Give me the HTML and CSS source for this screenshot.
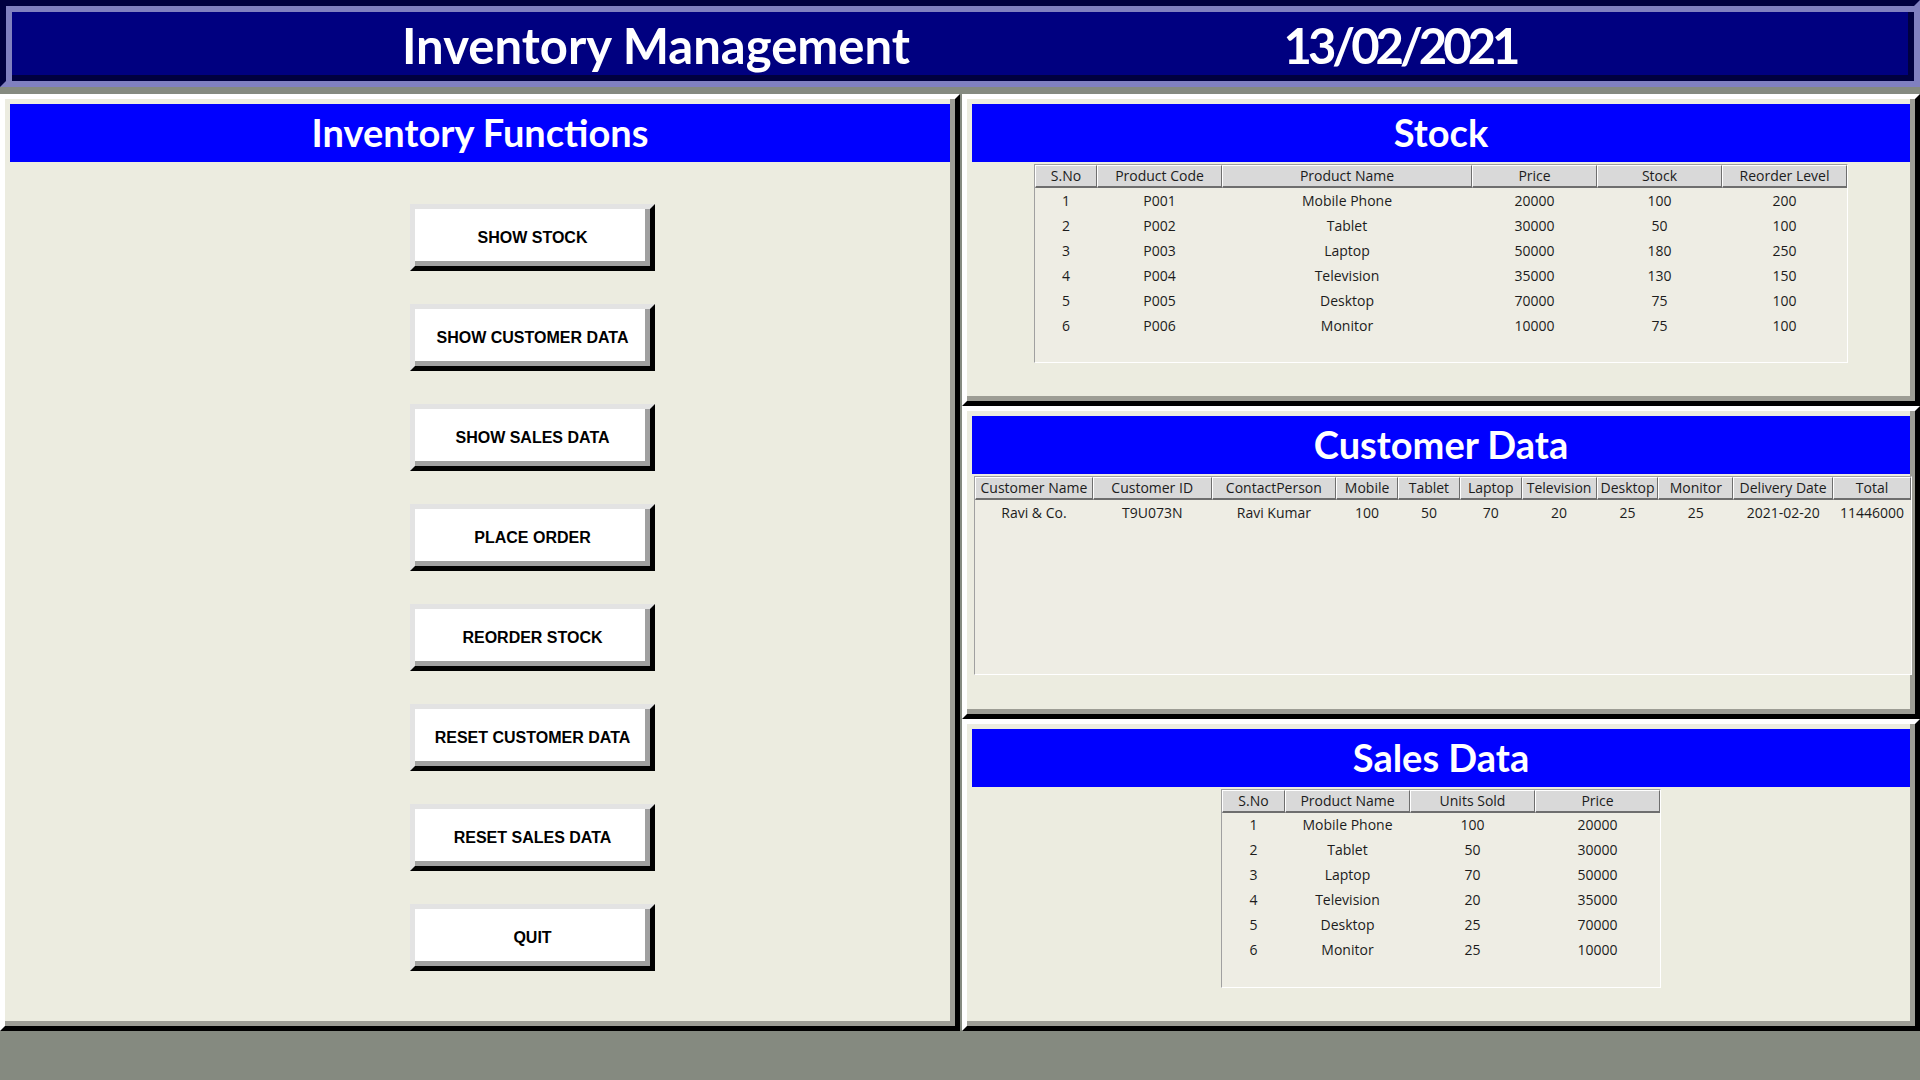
FILE: index.html
```html
<!DOCTYPE html>
<html lang="en">
<head>
<meta charset="utf-8">
<title>Inventory Management</title>
<link rel="stylesheet" href="styles.css">
</head>
<body>
<div class="app">
  <header class="topbar">
    <div class="title-main">Inventory Management</div>
    <div class="title-date">13/02/2021</div>
  </header>
  <main class="workspace">
    <section class="panel panel-functions">
      <h2 class="panel-title">Inventory Functions</h2>
      <div class="button-list">
        <button class="action-btn">SHOW STOCK</button>
        <button class="action-btn">SHOW CUSTOMER DATA</button>
        <button class="action-btn">SHOW SALES DATA</button>
        <button class="action-btn">PLACE ORDER</button>
        <button class="action-btn">REORDER STOCK</button>
        <button class="action-btn">RESET CUSTOMER DATA</button>
        <button class="action-btn">RESET SALES DATA</button>
        <button class="action-btn">QUIT</button>
      </div>
    </section>
    <div class="right-col">
      <section class="panel panel-data">
        <h2 class="panel-title">Stock</h2>
        <div class="grid-box stock-box">
          <table class="grid">
            <colgroup>
              <col class="w62"><col class="w125"><col class="w250"><col class="w125"><col class="w125"><col class="w125">
            </colgroup>
            <thead>
              <tr><th>S.No</th><th>Product Code</th><th>Product Name</th><th>Price</th><th>Stock</th><th>Reorder Level</th></tr>
            </thead>
            <tbody>
              <tr><td>1</td><td>P001</td><td>Mobile Phone</td><td>20000</td><td>100</td><td>200</td></tr>
              <tr><td>2</td><td>P002</td><td>Tablet</td><td>30000</td><td>50</td><td>100</td></tr>
              <tr><td>3</td><td>P003</td><td>Laptop</td><td>50000</td><td>180</td><td>250</td></tr>
              <tr><td>4</td><td>P004</td><td>Television</td><td>35000</td><td>130</td><td>150</td></tr>
              <tr><td>5</td><td>P005</td><td>Desktop</td><td>70000</td><td>75</td><td>100</td></tr>
              <tr><td>6</td><td>P006</td><td>Monitor</td><td>10000</td><td>75</td><td>100</td></tr>
            </tbody>
          </table>
        </div>
      </section>
      <section class="panel panel-data">
        <h2 class="panel-title">Customer Data</h2>
        <div class="grid-box customer-box">
          <table class="grid">
            <colgroup>
              <col class="w118"><col class="w119"><col class="w125"><col class="w62"><col class="w62"><col class="w62"><col class="w75"><col class="w62"><col class="w75"><col class="w100"><col class="w78">
            </colgroup>
            <thead>
              <tr><th>Customer Name</th><th>Customer ID</th><th>ContactPerson</th><th>Mobile</th><th>Tablet</th><th>Laptop</th><th>Television</th><th>Desktop</th><th>Monitor</th><th>Delivery Date</th><th>Total</th></tr>
            </thead>
            <tbody>
              <tr><td>Ravi &amp; Co.</td><td>T9U073N</td><td>Ravi Kumar</td><td>100</td><td>50</td><td>70</td><td>20</td><td>25</td><td>25</td><td>2021-02-20</td><td>11446000</td></tr>
            </tbody>
          </table>
        </div>
      </section>
      <section class="panel panel-data">
        <h2 class="panel-title">Sales Data</h2>
        <div class="grid-box sales-box">
          <table class="grid">
            <colgroup>
              <col class="w63"><col class="w125"><col class="w125"><col class="w125">
            </colgroup>
            <thead>
              <tr><th>S.No</th><th>Product Name</th><th>Units Sold</th><th>Price</th></tr>
            </thead>
            <tbody>
              <tr><td>1</td><td>Mobile Phone</td><td>100</td><td>20000</td></tr>
              <tr><td>2</td><td>Tablet</td><td>50</td><td>30000</td></tr>
              <tr><td>3</td><td>Laptop</td><td>70</td><td>50000</td></tr>
              <tr><td>4</td><td>Television</td><td>20</td><td>35000</td></tr>
              <tr><td>5</td><td>Desktop</td><td>25</td><td>70000</td></tr>
              <tr><td>6</td><td>Monitor</td><td>25</td><td>10000</td></tr>
            </tbody>
          </table>
        </div>
      </section>
    </div>
  </main>
</div>
</body>
</html>
```

FILE: styles.css
```css
* { box-sizing: border-box; }

html, body {
  margin: 0;
  padding: 0;
}

body {
  width: 1920px;
  height: 1080px;
  overflow: hidden;
  background: #858a80;
  font-family: "Open Sans", "Noto Sans", sans-serif;
}

.app {
  display: flex;
  flex-direction: column;
}

/* ---------- top bar (groove relief) ---------- */
.topbar {
  height: 87px;
  background: #000080;
  border: 6px solid;
  border-color: #000040 #8080c0 #8080c0 #000040;
  box-shadow: inset 6px 6px 0 #8080c0, inset -6px -6px 0 #000040;
  display: flex;
  align-items: center;
  padding-top: 4px;
  color: #ffffff;
  font-family: Lato, "Open Sans", sans-serif;
  font-weight: 700;
  font-size: 49px;
  line-height: 1;
  margin-bottom: 7px;
}

.title-main {
  width: 600px;
  margin-left: 350px;
  text-align: center;
  white-space: nowrap;
}

.title-date {
  width: 300px;
  margin-left: 294px;
  text-align: center;
  white-space: nowrap;
  letter-spacing: -4px;
}

/* ---------- workspace ---------- */
.workspace {
  display: flex;
  gap: 2px;
  height: 937px;
}

.panel {
  background: #ecece0;
  border: 5px solid;
  border-color: #ffffff #000000 #000000 #ffffff;
  box-shadow: inset -5px -5px 0 #9d9d95;
  padding: 5px;
}

.panel-functions {
  width: 960px;
  height: 100%;
}

.right-col {
  width: 958px;
  display: flex;
  flex-direction: column;
}

.panel-data {
  flex: 1;
  display: flex;
  flex-direction: column;
  align-items: center;
}

.panel-title {
  margin: 0;
  height: 58px;
  width: 100%;
  background: #0000ff;
  color: #ffffff;
  font-family: Lato, "Open Sans", sans-serif;
  font-weight: 700;
  font-size: 38px;
  line-height: 56px;
  text-align: center;
}

/* ---------- action buttons ---------- */
.button-list {
  display: flex;
  flex-direction: column;
  gap: 33px;
  margin-top: 42px;
  padding-left: 400px;
}

.action-btn {
  width: 245px;
  height: 67px;
  margin: 0;
  padding: 0;
  background: #ffffff;
  border: 5px solid;
  border-color: #e3e3e3 #000000 #000000 #e3e3e3;
  box-shadow: inset -5px -5px 0 #a0a0a0;
  font-family: "Liberation Sans", Arial, sans-serif;
  font-weight: 700;
  font-size: 16px;
  color: #000000;
  text-align: center;
  cursor: pointer;
}

/* ---------- data grids ---------- */
.grid-box {
  margin-top: 2px;
  height: 199px;
  background: #eeede4;
  border: 1px solid;
  border-color: #a0a0a0 #ffffff #ffffff #a0a0a0;
  overflow: hidden;
}

.stock-box { width: 814px; }
.customer-box { width: 938px; align-self: flex-start; margin-left: 2px; }
.sales-box { width: 440px; }

.grid {
  border-collapse: separate;
  border-spacing: 0;
  table-layout: fixed;
  font-size: 14px;
  color: #1c1c1c;
}

.w62 { width: 62px; }
.w63 { width: 63px; }
.w78 { width: 78px; }
.w75 { width: 75px; }
.w100 { width: 100px; }
.w118 { width: 118px; }
.w119 { width: 119px; }
.w125 { width: 125px; }
.w250 { width: 250px; }

.grid th {
  height: 23px;
  padding: 0;
  background: #d9d9d9;
  font-weight: 400;
  text-align: center;
  white-space: nowrap;
  overflow: hidden;
  border-top: 1px solid #ffffff;
  border-left: 1px solid #ffffff;
  border-right: 1px solid #6e6e6e;
  border-bottom: 2px solid #6e6e6e;
  line-height: 18px;
}

.grid td {
  height: 25px;
  padding: 0;
  text-align: center;
  white-space: nowrap;
  overflow: hidden;
  line-height: 24px;
}
```
